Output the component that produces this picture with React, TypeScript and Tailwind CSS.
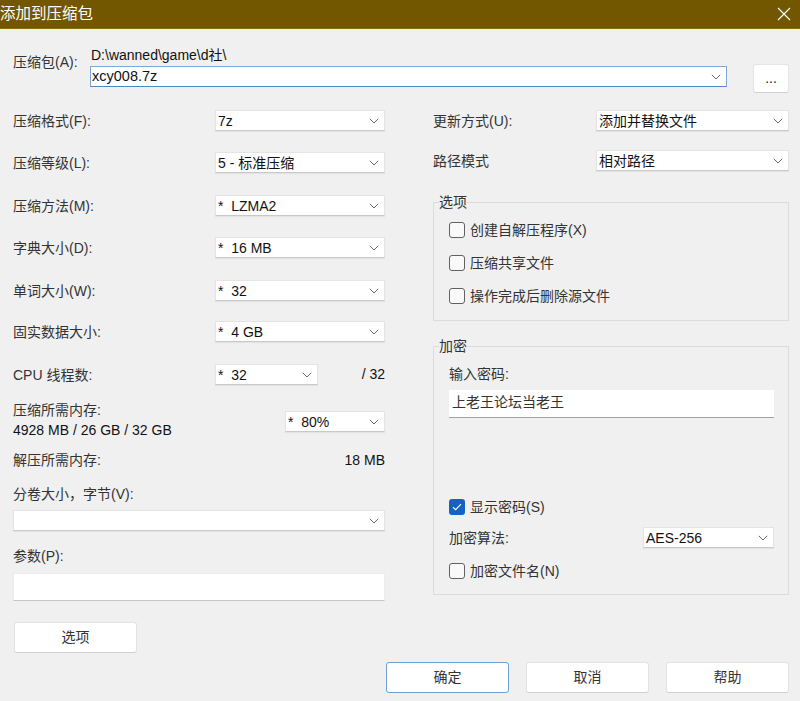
import React from "react";

function Chevron() {
  return (
    <svg width="10" height="6" viewBox="0 0 10 6" className="shrink-0">
      <path d="M0.8 0.8 L5 5 L9.2 0.8" fill="none" stroke="#6a6a6a" strokeWidth="1" />
    </svg>
  );
}

function Combo({ text, className }: { text: string; className: string }) {
  return (
    <div
      className={`flex h-[21px] items-center justify-between border border-[#e4e4e4] border-b-[#c9c9c9] bg-white pl-[2px] pr-[5px] shadow-[0_1px_1px_rgba(0,0,0,0.05)] ${className}`}
    >
      <span className="whitespace-pre text-[14px] leading-none text-[#111]">{text}</span>
      <Chevron />
    </div>
  );
}

function CheckBox({ label, checked }: { label: string; checked?: boolean }) {
  return (
    <div className="flex h-[18px] items-center">
      {checked ? (
        <div className="flex h-[16px] w-[16px] items-center justify-center rounded-[3px] bg-[#1462c4]">
          <svg width="10" height="8" viewBox="0 0 10 8">
            <path d="M1 4.2 L3.6 6.6 L9 1.2" fill="none" stroke="white" strokeWidth="1.2" />
          </svg>
        </div>
      ) : (
        <div className="h-[16px] w-[16px] rounded-[3px] border border-[#616161] bg-[#f9f9f9]" />
      )}
      <span className="ml-[5px]">{label}</span>
    </div>
  );
}

function Btn({ text, primary, className }: { text: string; primary?: boolean; className?: string }) {
  return (
    <div
      className={`flex h-[31px] w-[123px] items-center justify-center rounded-[3px] border bg-white ${
        primary ? "border-[#6f9fd3]" : "border-[#e2e2e2] border-b-[#d0d0d0]"
      } ${className ?? ""}`}
    >
      {text}
    </div>
  );
}

function LabelRow({ label, children }: { label: string; children: React.ReactNode }) {
  return (
    <div className="flex h-[21px] items-center justify-between">
      <span className="pt-[2px]">{label}</span>
      {children}
    </div>
  );
}

export default function App() {
  return (
    <div className="h-[701px] w-[800px] overflow-hidden bg-[#f0f0f0] font-['Liberation_Sans','Noto_Sans_CJK_SC',sans-serif] text-[14px] text-[#333]">
      {/* Title bar */}
      <div className="flex h-[29px] items-center justify-between border-b border-[#8a6c10] bg-[#725700] pr-[9px]">
        <span className="text-[15.5px] leading-none text-white">添加到压缩包</span>
        <svg width="14" height="14" viewBox="0 0 14 14">
          <path d="M1 1 L13 13 M13 1 L1 13" stroke="white" strokeWidth="1.2" />
        </svg>
      </div>

      {/* Archive row */}
      <div className="mt-[18px] flex h-[63px] items-start pl-[13px]">
        <div className="mt-[7px] w-[77px] leading-[16px]">压缩包(A):</div>
        <div className="flex w-[637px] flex-col">
          <div className="h-[19px] pl-[1px] leading-[16px] text-[#111]">D:\wanned\game\d社\</div>
          <div className="flex h-[21px] items-center justify-between border border-[#7fa8d4] border-b-[#4f86c4] bg-white pl-[1px] pr-[5px]">
            <span className="text-[14.5px] leading-none text-[#111]">xcy008.7z</span>
            <Chevron />
          </div>
        </div>
        <div className="ml-[26px] mt-[17px] flex h-[29px] w-[36px] items-center justify-center rounded-[3px] border border-[#e4e4e4] border-b-[#d2d2d2] bg-white text-[#222]">
          ...
        </div>
      </div>

      {/* Columns */}
      <div className="flex items-start pl-[13px]">
        {/* Left column */}
        <div className="flex w-[372px] flex-col">
          <LabelRow label="压缩格式(F):">
            <Combo text="7z" className="w-[170px]" />
          </LabelRow>
          <div className="mt-[21px]">
            <LabelRow label="压缩等级(L):">
              <Combo text="5 - 标准压缩" className="w-[170px]" />
            </LabelRow>
          </div>
          <div className="mt-[22px]">
            <LabelRow label="压缩方法(M):">
              <Combo text="*  LZMA2" className="w-[170px]" />
            </LabelRow>
          </div>
          <div className="mt-[21px]">
            <LabelRow label="字典大小(D):">
              <Combo text="*  16 MB" className="w-[170px]" />
            </LabelRow>
          </div>
          <div className="mt-[22px]">
            <LabelRow label="单词大小(W):">
              <Combo text="*  32" className="w-[170px]" />
            </LabelRow>
          </div>
          <div className="mt-[20px]">
            <LabelRow label="固实数据大小:">
              <Combo text="*  4 GB" className="w-[170px]" />
            </LabelRow>
          </div>
          <div className="mt-[22px] flex h-[21px] items-center">
            <span className="w-[202px] pt-[2px]">CPU 线程数:</span>
            <Combo text="*  32" className="w-[103px]" />
            <span className="ml-auto text-[#111]">/ 32</span>
          </div>
          <div className="mt-[17px] flex h-[36px] items-start justify-between">
            <div className="flex flex-col leading-[16px]">
              <span>压缩所需内存:</span>
              <span className="mt-[4px] text-[#111]">4928 MB / 26 GB / 32 GB</span>
            </div>
            <div className="mt-[9px]">
              <Combo text="*  80%" className="w-[100px]" />
            </div>
          </div>
          <div className="mt-[14px] flex h-[16px] items-center justify-between leading-[16px]">
            <span>解压所需内存:</span>
            <span className="text-[#111]">18 MB</span>
          </div>
          <div className="mt-[18px] h-[16px] leading-[16px]">分卷大小，字节(V):</div>
          <div className="mt-[8px]">
            <Combo text="" className="w-[372px] border-[#c8c8c8] border-b-[#bdbdbd]" />
          </div>
          <div className="mt-[17px] h-[16px] leading-[16px]">参数(P):</div>
          <div className="mt-[9px] h-[28px] w-[372px] border border-[#ececec] border-b-[#c6c6c6] bg-white" />
          <Btn text="选项" className="ml-[1px] mt-[21px]" />
        </div>

        {/* Right column */}
        <div className="ml-[48px] flex w-[356px] flex-col">
          <LabelRow label="更新方式(U):">
            <Combo text="添加并替换文件" className="w-[193px]" />
          </LabelRow>
          <div className="mt-[19px]">
            <LabelRow label="路径模式">
              <Combo text="相对路径" className="w-[193px]" />
            </LabelRow>
          </div>

          <fieldset className="mt-[23px] border border-[#dcdcdc] pb-[15px] pl-[15px]">
            <legend className="ml-[-10px] leading-[16px]">选项</legend>
            <div className="mt-[11px]">
              <CheckBox label="创建自解压程序(X)" />
            </div>
            <div className="mt-[15px]">
              <CheckBox label="压缩共享文件" />
            </div>
            <div className="mt-[15px]">
              <CheckBox label="操作完成后删除源文件" />
            </div>
          </fieldset>

          <fieldset className="mt-[17px] border border-[#dcdcdc] pb-[14px] pl-[15px] pr-[14px]">
            <legend className="ml-[-10px] leading-[16px]">加密</legend>
            <div className="mt-[12px] h-[16px] leading-[16px]">输入密码:</div>
            <div className="mt-[8px] h-[28px] border-b border-[#a3a3a3] bg-white pl-[3px] pt-[4px] leading-[16px] text-[14px] text-[#333]">
              上老王论坛当老王
            </div>
            <div className="mt-[80px]">
              <CheckBox label="显示密码(S)" checked />
            </div>
            <div className="mt-[11px] flex h-[21px] items-center justify-between">
              <span className="pt-[2px]">加密算法:</span>
              <Combo text="AES-256" className="w-[131px]" />
            </div>
            <div className="mt-[14px]">
              <CheckBox label="加密文件名(N)" />
            </div>
          </fieldset>
        </div>
      </div>

      {/* Bottom buttons */}
      <div className="mt-[9px] flex justify-end gap-[17px] pr-[11px]">
        <Btn text="确定" primary />
        <Btn text="取消" />
        <Btn text="帮助" />
      </div>
    </div>
  );
}
